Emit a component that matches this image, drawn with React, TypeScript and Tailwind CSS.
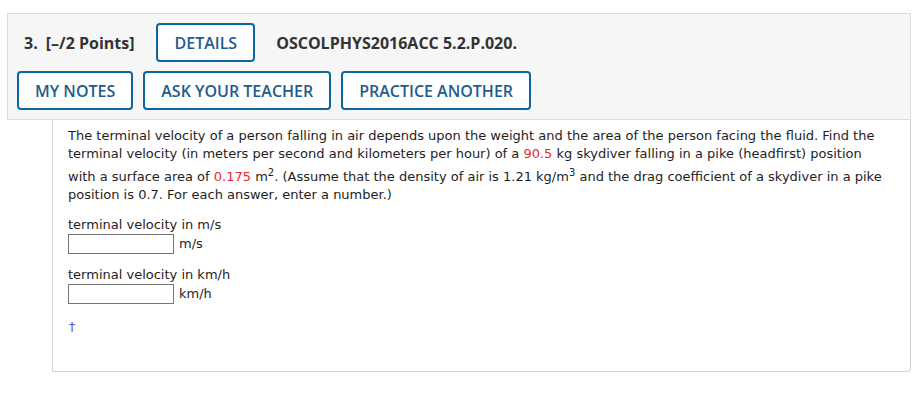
const OUTLINE_BTN =
  'h-[39px] rounded-[4px] border-2 border-[#0b67a0] bg-white px-[16px] text-[16px] font-semibold leading-none text-[#1f5c8c] uppercase';

const Red = ({ children }: { children: React.ReactNode }) => (
  <span className="text-[#e8272b]">{children}</span>
);

const Sup = ({ children }: { children: React.ReactNode }) => (
  <sup className="top-0 align-super text-[10px] leading-[19px]">{children}</sup>
);

const AnswerField = ({ label, unit }: { label: string; unit: string }) => (
  <div className="mt-[12px]">
    <div className="leading-[18px]">{label}</div>
    <div className="flex items-center gap-[5px]">
      <input
        type="text"
        className="h-[20px] w-[106px] border border-[#767676] bg-white outline-none"
      />
      <span className="leading-[20px]">{unit}</span>
    </div>
  </div>
);

export default function App() {
  return (
    <div className="min-h-[408px] bg-white pt-[13px]">
      {/* Question header */}
      <div
        className="ml-[7px] w-[904px] border border-[#dcdcdc] bg-[#f6f6f6] px-[9px] pt-[9px] pb-[9px]"
        style={{ fontFamily: '"Open Sans", "Liberation Sans", sans-serif' }}
      >
        <div className="flex h-[39px] items-center">
          <span className="ml-[7px] text-[16px] font-bold text-[#333]">3.</span>
          <span className="ml-[8px] text-[16px] font-bold text-[#333]">[–/2 Points]</span>
          <button className={`${OUTLINE_BTN} ml-[22px]`}>Details</button>
          <span className="ml-[21px] text-[16px] font-bold text-[#333]">OSCOLPHYS2016ACC 5.2.P.020.</span>
        </div>
        <div className="mt-[9px] flex gap-[10px]">
          <button className={OUTLINE_BTN}>My Notes</button>
          <button className={OUTLINE_BTN}>Ask Your Teacher</button>
          <button className={OUTLINE_BTN}>Practice Another</button>
        </div>
      </div>

      {/* Question body */}
      <div
        className="ml-[52px] h-[252px] w-[859px] rounded-br-[4px] border-r border-b border-l border-[#d2d2d2] pt-[7px] pr-[20px] pl-[15px] text-[13px] text-[#1e1e1e]"
        style={{ fontFamily: '"DejaVu Sans", Verdana, sans-serif' }}
      >
        <p className="leading-[18px]">
          The terminal velocity of a person falling in air depends upon the weight and the area of the person facing the
          fluid. Find the terminal velocity (in meters per second and kilometers per hour) of a <Red>90.5</Red> kg skydiver
          falling in a pike (headfirst) position with a surface area of <Red>0.175</Red> m<Sup>2</Sup>. (Assume that the
          density of air is 1.21 kg/m<Sup>3</Sup> and the drag coefficient of a skydiver in a pike position is 0.7. For each
          answer, enter a number.)
        </p>
        <AnswerField label="terminal velocity in m/s" unit="m/s" />
        <div className="mt-[8px]">
          <AnswerField label="terminal velocity in km/h" unit="km/h" />
        </div>
        <div className="mt-[14px] pl-[1px] text-[12px] leading-[18px] text-[#4a4ae0]">†</div>
      </div>
    </div>
  );
}
